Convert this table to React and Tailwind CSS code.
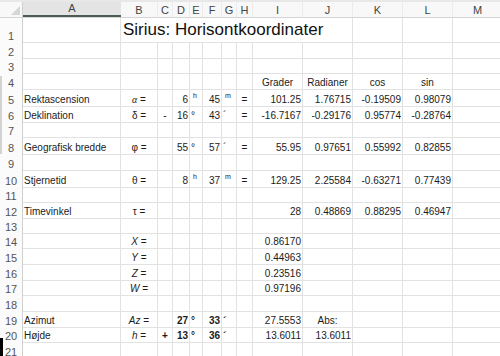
import React from 'react';

// column letter + width class
const COLS = [
  ['A', 'w-[98px]'], ['B', 'w-[37px]'], ['C', 'w-[15px]'], ['D', 'w-[17px]'],
  ['E', 'w-[13px]'], ['F', 'w-[19px]'], ['G', 'w-[15px]'], ['H', 'w-[16px]'],
  ['I', 'w-[50px]'], ['J', 'w-[50px]'], ['K', 'w-[50px]'], ['L', 'w-[50px]'],
  ['M', 'w-[50px]'],
];

const L = (t, b) => ({ t, a: 'l', b });
const C = (t, b) => ({ t, a: 'c', b });
const R = (t, b) => ({ t, a: 'r', b });
const S = (t) => ({ t, a: 'l', sup: true });

const it = (v) => (
  <>
    <i>{v}</i> =
  </>
);

const ROWS = [
  { n: 1, h: 'h-[25px]', title: 'Sirius: Horisontkoordinater' },
  { n: 2, h: 'h-[16px]' },
  { n: 3, h: 'h-[15px]' },
  { n: 4, h: 'h-[16px]', c: { I: C('Grader'), J: C('Radianer'), K: C('cos'), L: C('sin') } },
  {
    n: 5, h: 'h-[17px]',
    c: {
      A: L('Rektascension'), B: C(<><i className="font-['Liberation_Serif',serif]">α</i> =</>),
      D: R('6'), E: S('h'), F: R('45'), G: S('m'), H: C('='),
      I: R('101.25'), J: R('1.76715'), K: R('-0.19509'), L: R('0.98079'),
    },
  },
  {
    n: 6, h: 'h-[16px]',
    c: {
      A: L('Deklination'), B: C('δ ='), C: C('-'), D: R('16'), E: L('°'), F: R('43'), G: L('´'), H: C('='),
      I: R('-16.7167'), J: R('-0.29176'), K: R('0.95774'), L: R('-0.28764'),
    },
  },
  { n: 7, h: 'h-[15px]' },
  {
    n: 8, h: 'h-[17px]',
    c: {
      A: L('Geografisk bredde'), B: C('φ ='), D: R('55'), E: L('°'), F: R('57'), G: L('´'), H: C('='),
      I: R('55.95'), J: R('0.97651'), K: R('0.55992'), L: R('0.82855'),
    },
  },
  { n: 9, h: 'h-[16px]' },
  {
    n: 10, h: 'h-[17px]',
    c: {
      A: L('Stjernetid'), B: C('θ ='), D: R('8'), E: S('h'), F: R('37'), G: S('m'), H: C('='),
      I: R('129.25'), J: R('2.25584'), K: R('-0.63271'), L: R('0.77439'),
    },
  },
  { n: 11, h: 'h-[15px]' },
  {
    n: 12, h: 'h-[16px]',
    c: { A: L('Timevinkel'), B: C('τ ='), I: R('28'), J: R('0.48869'), K: R('0.88295'), L: R('0.46947') },
  },
  { n: 13, h: 'h-[15px]' },
  { n: 14, h: 'h-[15px]', c: { B: C(it('X')), I: R('0.86170') } },
  { n: 15, h: 'h-[16px]', c: { B: C(it('Y')), I: R('0.44963') } },
  { n: 16, h: 'h-[16px]', c: { B: C(it('Z')), I: R('0.23516') } },
  { n: 17, h: 'h-[15px]', c: { B: C(it('W')), I: R('0.97196') } },
  { n: 18, h: 'h-[16px]' },
  {
    n: 19, h: 'h-[16px]',
    c: {
      A: L('Azimut'), B: C(it('Az')), D: R('27', true), E: L('°', true), F: R('33', true), G: L('´', true),
      I: R('27.5553'), J: C('Abs:'),
    },
  },
  {
    n: 20, h: 'h-[15px]',
    c: {
      A: L('Højde'), B: C(it('h')), C: C('+', true), D: R('13', true), E: L('°', true), F: R('36', true), G: L('´', true),
      I: R('13.6011'), J: R('13.6011'),
    },
  },
  { n: 21, h: 'h-[16px]' },
];

function Cell({ w, h, spec }) {
  const justify = spec?.a === 'c' ? 'justify-center' : spec?.a === 'r' ? 'justify-end' : 'justify-start';
  return (
    <div className={`${w} ${h} shrink-0 flex items-end ${justify} px-[1px] border-r border-b border-[#e2e2e2]`}>
      {spec && (
        <span className={`leading-[12px] whitespace-nowrap ${spec.b ? 'font-bold' : ''}`}>
          {spec.sup ? <sup className="text-[7px] ml-[2px] -top-[5px]">{spec.t}</sup> : spec.t}
        </span>
      )}
    </div>
  );
}

function RowHead({ h, n }) {
  return (
    <div className={`w-[23px] ${h} shrink-0 flex items-end justify-center border-r border-[#d0d0d0] bg-[#fbfbfb] text-[#555] text-[11px] leading-[13px]`}>
      {n}
    </div>
  );
}

export default function App() {
  return (
    <div className="relative w-[500px] h-[356px] overflow-hidden bg-white text-[10px] text-[#1b1b1b] font-['Liberation_Sans',Arial,sans-serif]">
      <div className="h-[2px] bg-[#e8e8e8]" />

      {/* column letters */}
      <div className="flex h-[16px] bg-[#f8f8f8] border-b border-[#d4d4d4] text-[#444] text-[11px]">
        <div className="w-[23px] shrink-0 relative border-r border-[#d0d0d0]">
          <svg className="absolute right-[2px] bottom-[2px]" width="9" height="9" viewBox="0 0 9 9">
            <path d="M9 0 L9 9 L0 9 Z" fill="#d6d6d6" />
          </svg>
        </div>
        {COLS.map(([k, w]) => (
          <div
            key={k}
            className={`${w} shrink-0 flex items-end justify-center pb-[1px] leading-[12px] ${
              k === 'A' ? 'bg-[#e4e4e4] border-b-2 border-[#4c5e53]' : 'border-r border-[#ececec]'
            }`}
          >
            {k}
          </div>
        ))}
      </div>

      {ROWS.map((r) => (
        <div key={r.n} className="flex">
          <RowHead h={r.h} n={r.n} />
          {r.title ? (
            <>
              <Cell w="w-[98px]" h={r.h} />
              <div className={`w-[232px] ${r.h} shrink-0 flex items-end px-[2px] pb-[2px] border-r border-b border-[#e2e2e2]`}>
                <span className="text-[17px] leading-[20px] text-[#111] whitespace-nowrap">{r.title}</span>
              </div>
              <Cell w="w-[50px]" h={r.h} />
              <Cell w="w-[50px]" h={r.h} />
              <Cell w="w-[50px]" h={r.h} />
            </>
          ) : (
            COLS.map(([k, w]) => <Cell key={k} w={w} h={r.h} spec={r.c?.[k]} />)
          )}
        </div>
      ))}

      {/* scroll marks along the left edge */}
      <div className="absolute left-0 top-[76px] w-[2px] h-[78px] bg-[#d3d3d3]" />
      <div className="absolute left-0 top-[338px] w-[3px] h-[18px] bg-black" />
    </div>
  );
}
